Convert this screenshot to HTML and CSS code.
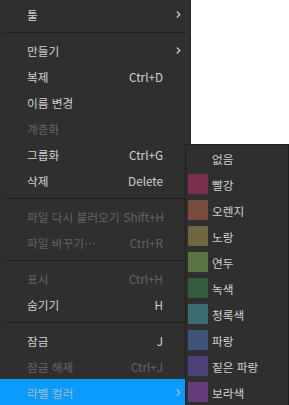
FILE: index.html
```html
<!DOCTYPE html>
<html lang="ko">
<head>
    <meta charset="UTF-8">
    <meta name="viewport" content="width=device-width, initial-scale=1.0">
    <title>메뉴</title>
    <link rel="stylesheet" href="styles.css">
</head>
<body>
    <div class="menu">
        <div class="item"><span class="label">툴</span><span class="key"></span><span class="tail"><svg class="chev" width="6" height="9" viewBox="0 0 6 9"><polyline points="1,1 4.5,4.5 1,8" fill="none" stroke="currentColor" stroke-width="1.6"/></svg></span></div>
        <div class="sep"></div>
        <div class="item"><span class="label">만들기</span><span class="key"></span><span class="tail"><svg class="chev" width="6" height="9" viewBox="0 0 6 9"><polyline points="1,1 4.5,4.5 1,8" fill="none" stroke="currentColor" stroke-width="1.6"/></svg></span></div>
        <div class="item"><span class="label">복제</span><span class="key">Ctrl+D</span><span class="tail"></span></div>
        <div class="item"><span class="label">이름 변경</span><span class="key"></span><span class="tail"></span></div>
        <div class="item off"><span class="label">계층화</span><span class="key"></span><span class="tail"></span></div>
        <div class="item"><span class="label">그룹화</span><span class="key">Ctrl+G</span><span class="tail"></span></div>
        <div class="item"><span class="label">삭제</span><span class="key">Delete</span><span class="tail"></span></div>
        <div class="sep"></div>
        <div class="item off"><span class="label">파일 다시 불러오기</span><span class="key">Shift+H</span><span class="tail"></span></div>
        <div class="item off"><span class="label">파일 바꾸기…</span><span class="key">Ctrl+R</span><span class="tail"></span></div>
        <div class="sep"></div>
        <div class="item off"><span class="label">표시</span><span class="key">Ctrl+H</span><span class="tail"></span></div>
        <div class="item"><span class="label">숨기기</span><span class="key">H</span><span class="tail"></span></div>
        <div class="sep"></div>
        <div class="item"><span class="label">잠금</span><span class="key">J</span><span class="tail"></span></div>
        <div class="item off"><span class="label">잠금 해제</span><span class="key">Ctrl+J</span><span class="tail"></span></div>
        <div class="item active"><span class="label">라벨 컬러</span><span class="key"></span><span class="tail"><svg class="chev" width="6" height="9" viewBox="0 0 6 9"><polyline points="1,1 4.5,4.5 1,8" fill="none" stroke="currentColor" stroke-width="1.6"/></svg></span></div>
    </div>

    <div class="submenu">
        <div class="color"><span class="swatch none"></span>없음</div>
        <div class="color"><span class="swatch red"></span>빨강</div>
        <div class="color"><span class="swatch orange"></span>오렌지</div>
        <div class="color"><span class="swatch yellow"></span>노랑</div>
        <div class="color"><span class="swatch lime"></span>연두</div>
        <div class="color"><span class="swatch green"></span>녹색</div>
        <div class="color"><span class="swatch teal"></span>청록색</div>
        <div class="color"><span class="swatch blue"></span>파랑</div>
        <div class="color"><span class="swatch navy"></span>짙은 파랑</div>
        <div class="color"><span class="swatch purple"></span>보라색</div>
    </div>
</body>
</html>
```

FILE: styles.css
```css
body {
    margin: 0;
    background-color: #fff;
    font-family: "Noto Sans CJK KR", "Noto Sans", sans-serif;
    font-size: 11.7px;
    overflow: hidden;
}

.menu {
    width: 191px;
    height: 405px;
    padding-top: 1px;
    box-sizing: border-box;
    background-color: #2f2f2f;
    border-right: 1px solid #262626;
    color: #d2d2d2;
}

.item {
    display: flex;
    align-items: center;
    height: 26px;
    padding-left: 27px;
    padding-right: 9px;
    white-space: nowrap;
}

.item .label {
    flex: 1;
}

.item .key {
    margin-left: 4px;
    text-align: right;
}

.item .tail {
    width: 18px;
    display: flex;
    align-items: center;
}

.chev {
    margin-left: 13px;
    color: #c8c8c8;
}

.item.off {
    color: #646464;
}

.item.active {
    background-color: #0a9bff;
    color: #a9b9c6;
}

.item.active .chev {
    color: #b4bcc4;
}

.sep {
    height: 10px;
    display: flex;
    align-items: center;
    padding: 0 5px 0 6px;
}

.sep::after {
    content: "";
    flex: 1;
    height: 1px;
    background-color: #1d1d1d;
}

.submenu {
    position: absolute;
    left: 185px;
    top: 144px;
    width: 104px;
    height: 280px;
    box-sizing: border-box;
    background-color: #2f2f2f;
    border: 1px solid #1e1e1e;
    color: #d2d2d2;
}

.color {
    display: flex;
    align-items: center;
    gap: 4px;
    height: 26px;
    padding-left: 2px;
}

.swatch {
    width: 20px;
    height: 20px;
}

.swatch.none { background-color: transparent; }
.swatch.red { background-color: #7b2f4d; }
.swatch.orange { background-color: #7a4b3c; }
.swatch.yellow { background-color: #6f6641; }
.swatch.lime { background-color: #5b7340; }
.swatch.green { background-color: #355b3d; }
.swatch.teal { background-color: #3c6c71; }
.swatch.blue { background-color: #3e5478; }
.swatch.navy { background-color: #4c3f7a; }
.swatch.purple { background-color: #643d7a; }
```
